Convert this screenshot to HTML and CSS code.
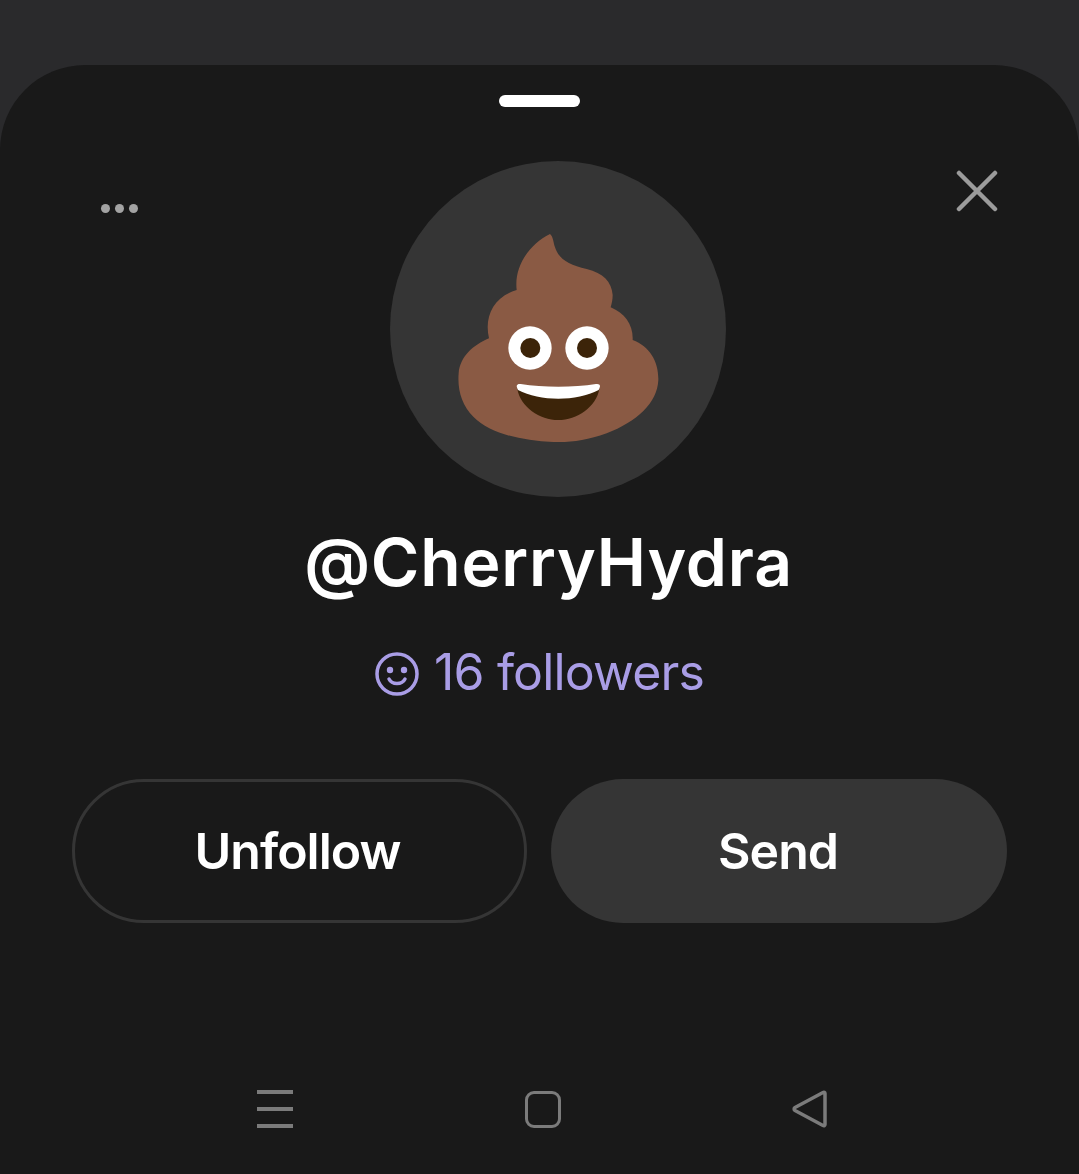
FILE: index.html
```html
<!DOCTYPE html>
<html lang="en">
<head>
    <meta charset="UTF-8">
    <title>@CherryHydra</title>
    <link rel="stylesheet" href="styles.css">
</head>
<body>
    <div class="sheet">
        <div class="handle"></div>

        <!-- top row: menu, avatar, close -->
        <div class="top-row">
            <div class="dots"><span></span><span></span><span></span></div>
            <div class="avatar">
                <svg class="poop" viewBox="0 0 720 690">
                    <path fill="#8a5a44" d="M330 42C340 50 340 68 345 82C355 115 385 135 440 147C490 160 515 185 518 225C518 240 515 250 512 262C555 280 580 315 578 360C630 380 656 425 655 480C652 550 590 605 500 640C440 662 390 668 340 666C240 662 150 640 100 590C65 555 52 510 56 460C60 410 100 375 147 355C132 290 160 230 230 210C222 140 265 75 330 42Z"/>
                    <circle cx="270" cy="384" r="65" fill="#fff"/>
                    <circle cx="441" cy="384" r="65" fill="#fff"/>
                    <circle cx="271" cy="384" r="30" fill="#3c2409"/>
                    <circle cx="441" cy="384" r="30" fill="#3c2409"/>
                    <path fill="#3c2409" d="M232 506C290 528 420 528 478 506C470 560 410 600 355 600C300 600 240 560 232 506Z"/>
                    <path fill="#fff" d="M230 498C232 492 236 491 242 492C310 503 400 503 468 492C475 491 480 493 480 499C479 504 478 506 476 510C410 545 300 545 234 510C232 506 231 503 230 498Z"/>
                </svg>
            </div>
            <svg class="close" viewBox="0 0 42 42">
                <path d="M3 3L39 39M39 3L3 39"/>
            </svg>
        </div>

        <h1 class="name">@CherryHydra</h1>

        <div class="followers">
            <svg class="smile" viewBox="0 0 44 44">
                <circle class="face" cx="22" cy="22" r="20"/>
                <circle class="eye" cx="15" cy="18" r="3.2"/>
                <circle class="eye" cx="29" cy="18" r="3.2"/>
                <path class="face" d="M14 27C17 33 27 33 30 27"/>
            </svg>
            <span>16 followers</span>
        </div>

        <div class="actions">
            <button class="btn btn-outline">Unfollow</button>
            <button class="btn btn-fill">Send</button>
        </div>

        <!-- android nav bar -->
        <div class="nav-bar">
            <div class="nav-menu"><span></span><span></span><span></span></div>
            <div class="nav-home"></div>
            <svg class="nav-back" viewBox="0 0 36 38">
                <path d="M33 3.5C33 2.5 32 2 31 2.500L3 17.500C1.800 18.300 1.800 19.700 3 20.500L31 35.500C32 36 33 35.500 33 34.500Z"/>
            </svg>
        </div>
    </div>
</body>
</html>
```

FILE: styles.css
```css
body {
    margin: 0;
    background-color: #2a2a2c;
    font-family: Inter, "Liberation Sans", sans-serif;
    color: #fff;
}
.sheet {
    margin-top: 65px;
    height: 1109px;
    background: #191919;
    border-radius: 85px 85px 0 0;
    display: flex;
    flex-direction: column;
    overflow: hidden;
}
.handle {
    width: 81px;
    height: 12px;
    margin: 30px auto 0;
    background: #fff;
    border-radius: 6px;
}
.top-row {
    display: grid;
    grid-template-columns: 390px 336px 1fr;
    margin-top: 54px;
}
.dots {
    display: flex;
    gap: 5px;
    margin: 43px 0 0 101px;
}
.dots span {
    width: 9px;
    height: 9px;
    border-radius: 50%;
    background: #a3a3a3;
}
.avatar {
    width: 336px;
    height: 336px;
    border-radius: 50%;
    background: #353535;
    display: flex;
    align-items: center;
    justify-content: center;
}
.poop {
    width: 240px;
    height: 230px;
    margin: 0 0 0 4px;
    position: relative;
    top: 6px;
}
.close {
    width: 42px;
    height: 42px;
    margin: 9px 81px 0 0;
    justify-self: end;
}
.close path {
    fill: none;
    stroke: #9b9b9b;
    stroke-width: 4.500;
    stroke-linecap: round;
}
.name {
    margin: 23px 0 0;
    padding-left: 18px;
    font-size: 66px;
    line-height: 84px;
    font-weight: 600;
    letter-spacing: 0.8px;
    text-align: center;
}
.followers {
    display: flex;
    align-items: center;
    justify-content: center;
    gap: 15px;
    margin-top: 38px;
    color: #a99de6;
    font-size: 50px;
    line-height: 60px;
    letter-spacing: -0.85px;
}
.smile {
    width: 44px;
    height: 44px;
    margin-top: 4px;
}
.face {
    fill: none;
    stroke: #a99de6;
    stroke-width: 3.500;
    stroke-linecap: round;
}
.eye {
    fill: #a99de6;
}
.actions {
    display: flex;
    gap: 24px;
    margin: 77px 72px 0;
}
.btn {
    flex: none;
    width: 456px;
    height: 144px;
    border-radius: 72px;
    font-family: inherit;
    font-size: 50px;
    font-weight: 600;
    letter-spacing: -1px;
    color: #fff;
}
.btn-outline {
    width: 455px;
    padding-right: 10px;
    background: transparent;
    border: 3px solid #353535;
}
.btn-fill {
    padding-right: 8px;
    background: #353535;
    border: none;
}
.nav-bar {
    display: flex;
    align-items: center;
    gap: 232px;
    margin-top: 167px;
    padding-left: 257px;
}
.nav-menu {
    width: 36px;
    display: flex;
    flex-direction: column;
    gap: 13.500px;
}
.nav-menu span {
    height: 3.500px;
    background: #7b7b7b;
}
.nav-home {
    box-sizing: border-box;
    width: 36px;
    height: 37px;
    border: 3.500px solid #7b7b7b;
    border-radius: 9px;
}
.nav-back {
    width: 36px;
    height: 38px;
    margin-left: -1px;
}
.nav-back path {
    fill: none;
    stroke: #7b7b7b;
    stroke-width: 3.500;
    stroke-linejoin: round;
}
```
